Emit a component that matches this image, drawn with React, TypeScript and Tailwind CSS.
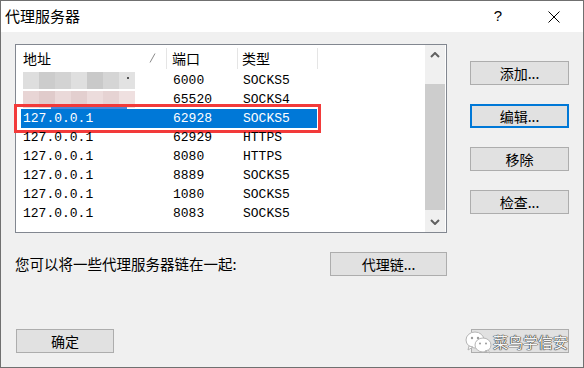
import React from "react";

const cjk = "font-['Noto_Sans_CJK_SC','Noto_Sans',sans-serif]";
const mono = "font-['Liberation_Mono',monospace]";

const rows = [
  { host: "", port: "6000", type: "SOCKS5", blur: "gray" },
  { host: "", port: "65520", type: "SOCKS4", blur: "pink" },
  { host: "127.0.0.1", port: "62928", type: "SOCKS5", selected: true },
  { host: "127.0.0.1", port: "62929", type: "HTTPS" },
  { host: "127.0.0.1", port: "8080", type: "HTTPS" },
  { host: "127.0.0.1", port: "8889", type: "SOCKS5" },
  { host: "127.0.0.1", port: "1080", type: "SOCKS5" },
  { host: "127.0.0.1", port: "8083", type: "SOCKS5" },
];

const grayBlocks = ["#dedede", "#cccccc", "#d3d3d3", "#dfdfdf", "#c9c9c9", "#d5d5d5", "#e2e2e2"];
const pinkBlocks = ["#e8d5d5", "#e0cbcb", "#ead9d9", "#e3cfcf", "#ecdcdc", "#e6d3d3", "#efe0e0"];

function Mosaic({ kind }: { kind: string }) {
  const colors = kind === "gray" ? grayBlocks : pinkBlocks;
  return (
    <div className="relative h-full w-[112px]">
      <div className="flex h-full items-center blur-[0.6px]">
        {colors.map((c, i) => (
          <div key={i} className="h-[17px] w-[16px]" style={{ background: c }} />
        ))}
      </div>
      {kind === "gray" && (
        <div className="absolute left-[104px] top-[6px] h-[2px] w-[2px] bg-[#555]" />
      )}
      {kind === "pink" && (
        <div className="absolute -bottom-px left-[28px] h-[3px] w-[76px] bg-[#4a86d8] blur-[0.5px]" />
      )}
    </div>
  );
}

function Button({
  label,
  focused,
  className = "",
}: {
  label: string;
  focused?: boolean;
  className?: string;
}) {
  return (
    <div
      className={
        "flex h-[24px] items-center justify-center bg-[#e1e1e1] text-[14px] text-black " +
        cjk +
        " " +
        (focused ? "border-2 border-[#0078d7] " : "border border-[#adadad] ") +
        className
      }
    >
      {label}
    </div>
  );
}

function Chevron({ down }: { down?: boolean }) {
  return (
    <svg width="10" height="6" viewBox="0 0 10 6" className={down ? "rotate-180" : ""}>
      <path d="M1 5 L5 1 L9 5" fill="none" stroke="#606060" strokeWidth="2" />
    </svg>
  );
}

function ListBox() {
  return (
    <div className="flex h-[189px] w-[432px] border border-[#828790] bg-white">
      <div className="flex w-[409px] flex-col">
        <div className={"flex h-[26px] items-center text-[14px] " + cjk}>
          <div className="flex h-full w-[150px] items-center pl-[7px]">
            <span>地址</span>
            <svg width="7" height="10" viewBox="0 0 7 10" className="ml-auto mr-[10px]">
              <path d="M6 0.5 L1 9.5" stroke="#8a8a8a" strokeWidth="1" />
            </svg>
          </div>
          <div className="h-[21px] w-px bg-[#e5e5e5]" />
          <div className="w-[70px] pl-[5px]">端口</div>
          <div className="h-[21px] w-px bg-[#e5e5e5]" />
          <div className="w-[79px] pl-[4px]">类型</div>
          <div className="h-[21px] w-px bg-[#e5e5e5]" />
        </div>
        {rows.map((r, i) => (
          <div key={i} className="relative h-[19px]">
            <div
              className={
                "ml-[5px] flex h-full w-[296px] items-center text-[13px] " +
                mono +
                (r.selected ? " bg-[#0078d7] text-white" : " text-black")
              }
            >
              <div className="flex h-full w-[145px] items-center pl-[2px]">
                {r.blur ? <Mosaic kind={r.blur} /> : r.host}
              </div>
              <div className="w-[71px] pl-[7px]">{r.port}</div>
              <div className="w-[80px] pl-[6px]">{r.type}</div>
            </div>
            {r.selected && (
              <div className="absolute -left-[2px] -top-[5px] h-[29px] w-[307px] border-[3px] border-[#f23a3a]" />
            )}
          </div>
        ))}
      </div>
      <div className="flex w-[20px] flex-col bg-[#f0f0f0]">
        <div className="flex h-[20px] items-center justify-center">
          <Chevron />
        </div>
        <div className="h-[19px]" />
        <div className="h-[126px] bg-[#cdcdcd]" />
        <div className="flex-1" />
        <div className="flex h-[20px] items-center justify-center">
          <Chevron down />
        </div>
      </div>
    </div>
  );
}

function WeChatIcon() {
  return (
    <svg width="28" height="24" viewBox="0 0 28 24">
      <ellipse cx="10" cy="10" rx="9" ry="8" fill="#fff" stroke="#b5b5b5" strokeWidth="1" />
      <path d="M4 16 L3 20 L8 17 Z" fill="#fff" stroke="#b5b5b5" strokeWidth="1" />
      <circle cx="7" cy="8" r="1.2" fill="#9a9a9a" />
      <circle cx="13" cy="8" r="1.2" fill="#9a9a9a" />
      <ellipse cx="18" cy="15" rx="8" ry="7" fill="#fff" stroke="#b5b5b5" strokeWidth="1" />
      <path d="M23 20 L25 23 L20 21 Z" fill="#fff" stroke="#b5b5b5" strokeWidth="1" />
      <circle cx="15" cy="13.5" r="1" fill="#9a9a9a" />
      <circle cx="21" cy="13.5" r="1" fill="#9a9a9a" />
    </svg>
  );
}

export default function App() {
  return (
    <div className="flex h-[368px] w-[584px] flex-col border border-[#707070] bg-[#f0f0f0]">
      <div className="flex h-[31px] shrink-0 items-center bg-white">
        <span className={"pl-[4px] text-[15px] text-black " + cjk}>代理服务器</span>
        <span className="ml-auto mr-[46px] font-['Liberation_Sans',sans-serif] text-[15px] text-black">?</span>
        <svg width="12" height="12" viewBox="0 0 12 12" className="mr-[23px]">
          <path d="M0.5 0.5 L11.5 11.5 M11.5 0.5 L0.5 11.5" stroke="#000" strokeWidth="1" />
        </svg>
      </div>

      <div className="flex flex-col pl-[14px] pt-[12px]">
        <div className="flex">
          <ListBox />
          <div className="ml-[23px] flex flex-col gap-[19px] pt-[17px]">
            <Button label="添加..." className="w-[99px]" />
            <Button label="编辑..." focused className="w-[99px]" />
            <Button label="移除" className="w-[99px]" />
            <Button label="检查..." className="w-[99px]" />
          </div>
        </div>

        <div className={"mt-[19px] flex w-[432px] items-center " + cjk}>
          <span className="text-[14.5px] text-black">您可以将一些代理服务器链在一起:</span>
          <Button label="代理链..." className="ml-auto w-[117px]" />
        </div>

        <div className="mt-[53px] flex w-[554px] items-center">
          <Button label="确定" className="ml-px w-[98px]" />
          <div className="relative ml-auto">
            <div className="flex h-[24px] w-[98px] items-center justify-end border border-[#adadad] bg-[#e1e1e1]">
              <span
                className={
                  "text-[15px] leading-none text-[#f4f4f4] [text-shadow:0_0_1px_#222,0_0_1px_#222,0_0_1px_#222] " + cjk
                }
              >
                菜鸟学信安
              </span>
            </div>
            <div className="absolute -left-[6px] top-[1px]">
              <WeChatIcon />
            </div>
          </div>
        </div>
      </div>
    </div>
  );
}
